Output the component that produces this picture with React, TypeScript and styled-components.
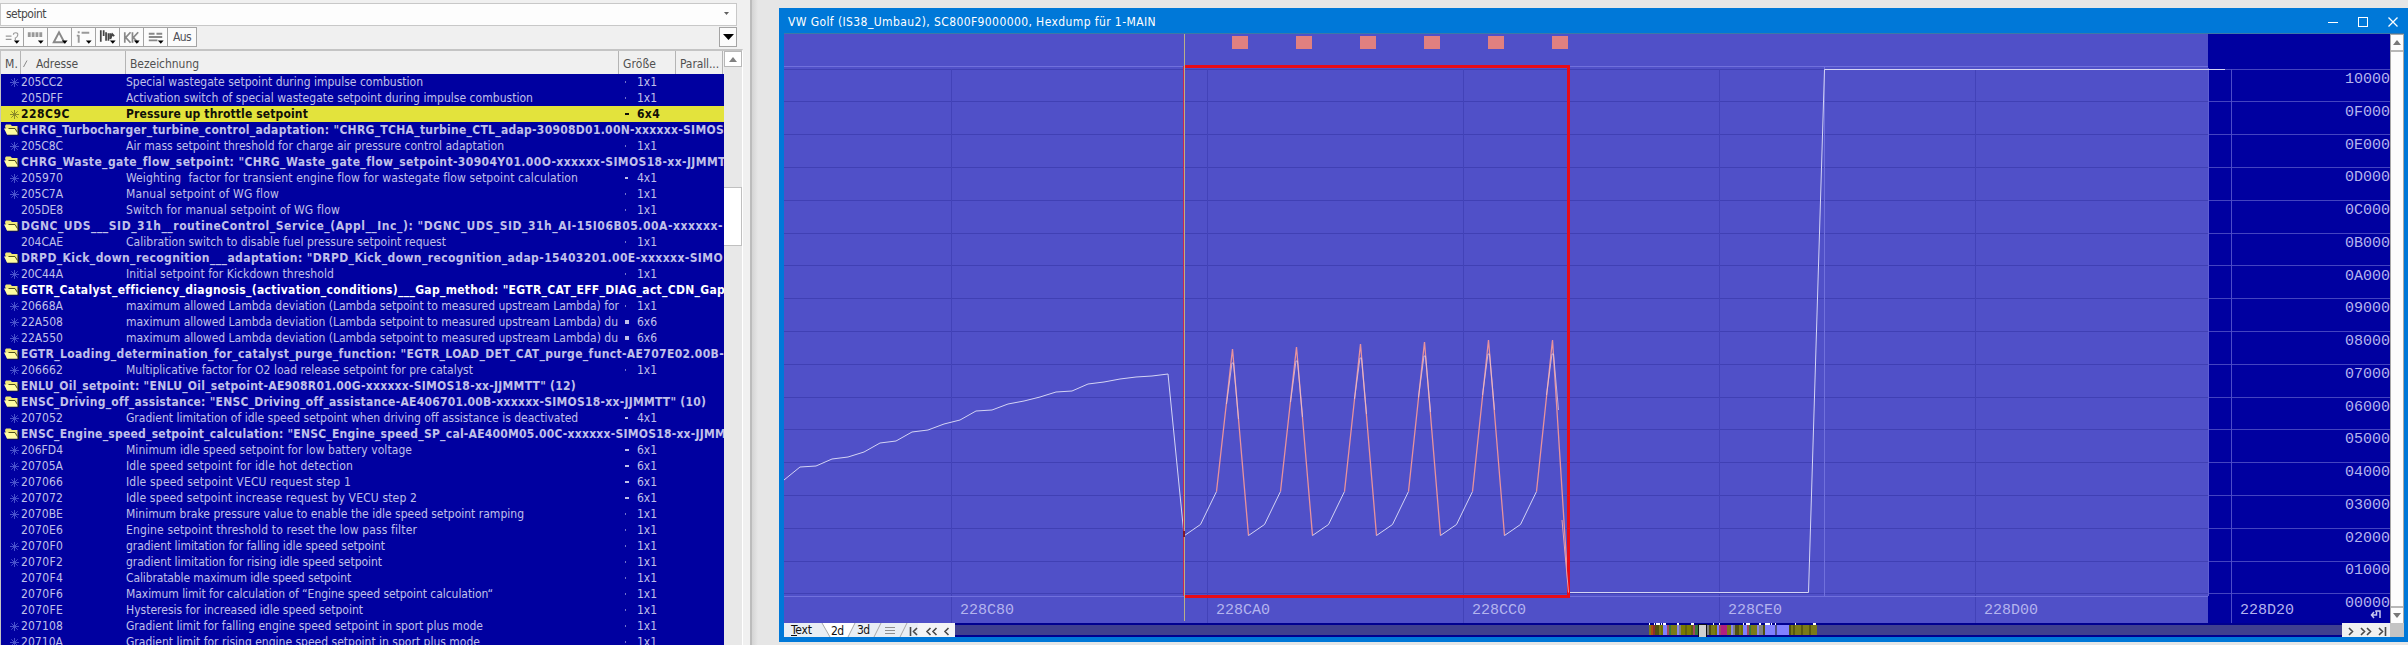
import React, { useLayoutEffect, useRef, useState } from "react";
import styled, { createGlobalStyle } from "styled-components";

const GlobalStyle = createGlobalStyle`
  html, body { margin: 0; height: 645px; overflow: hidden; background: #e6e6e6; }
  * { box-sizing: border-box; }
  #root { height: 645px; font-family: "DejaVu Sans Condensed", "DejaVu Sans", sans-serif; font-stretch: condensed; font-size: 12px; }
`;

const Desktop = styled.div`
  display: flex;
  width: 2408px;
  height: 645px;
  overflow: hidden;
`;

const SidePanel = styled.aside`
  width: 752px;
  flex: none;
  display: flex;
  flex-direction: column;
  background: #f0f0f0;
  border-right: 2px solid #bcbcbc;
  padding-top: 3px;
`;

const SearchBox = styled.div`
  width: 737px;
  height: 23px;
  flex: none;
  display: flex;
  align-items: center;
  justify-content: space-between;
  padding: 0 7px 2px 5px;
  color: #484848;
  background: #fdfdfd;
  border: 1px solid #c8c8c8;
`;

const Toolbar = styled.div`
  display: flex;
  justify-content: space-between;
  width: 737px;
  height: 20px;
  margin-top: 1px;
  flex: none;
`;

const ButtonGroup = styled.div`
  display: flex;
`;

const ToolButton = styled.button<{ $w?: number }>`
  width: ${(p) => p.$w ?? 24}px;
  height: 20px;
  padding: 0;
  display: flex;
  align-items: center;
  justify-content: center;
  border: 1px solid #a4a4a4;
  border-left-width: ${(p) => (p.$w === 18 ? 1 : 0)}px;
  background: #fbfbfb;
  color: #505058;
  font: inherit;
`;

const Table = styled.section`
  display: flex;
  width: 743px;
  flex: 1;
  min-height: 0;
  margin-top: 2px;
  border: 1px solid #c4c4c4;
  border-bottom: 0;
  border-top-width: 2px;
  border-right-color: #fff;
  overflow: hidden;
`;

const TableMain = styled.div`
  width: 723px;
  flex: none;
  overflow: hidden;
`;

const HeaderRow = styled.div`
  display: grid;
  grid-template-columns: 20px 105px 493px 57px 47px 1px;
  height: 23px;
  background: #f0f0f0;
  color: #505050;
`;

const HeaderCell = styled.div<{ $pad?: number }>`
  display: flex;
  align-items: center;
  gap: 8px;
  padding: 2px 0 0 ${(p) => p.$pad ?? 4}px;
  border-right: 1px solid #b4b4b4;
  white-space: nowrap;
`;

type Tone = "normal" | "picked" | "bright";

const Row = styled.div<{ $tone: Tone; $bold: boolean }>`
  display: grid;
  grid-template-columns: 20px 105px 493px 18px 1fr;
  align-items: center;
  height: 16px;
  line-height: 16px;
  white-space: nowrap;
  overflow: hidden;
  background: ${(p) => (p.$tone === "picked" ? "#e3e33c" : "#0000a0")};
  color: ${(p) => (p.$tone === "picked" ? "#101008" : p.$tone === "bright" ? "#ffffff" : "#c0c0ea")};
  font-weight: ${(p) => (p.$bold ? 700 : 400)};
`;

const MarkCell = styled.div`
  display: flex;
  justify-content: flex-end;
  padding-right: 2px;
`;

const Cell = styled.div`
  height: 16px;
`;

const GroupTitle = styled.div`
  grid-column: 2 / -1;
  height: 16px;
`;

const Line = styled.span`
  display: inline-block;
  white-space: pre;
`;

/* One line of text, tracked so that it takes up the given width. */
const Fitted = ({ width, children }: { width: number; children: string }) => {
  const ref = useRef<HTMLSpanElement>(null);
  const [tracking, setTracking] = useState(0);
  useLayoutEffect(() => {
    if (ref.current) {
      const natural = ref.current.getBoundingClientRect().width;
      setTracking((width - natural) / children.length);
    }
  }, [width, children]);
  return <Line ref={ref} style={{ letterSpacing: `${tracking}px` }}>{children}</Line>;
};

const Dot = styled.i<{ $w: number; $h: number }>`
  margin-left: 6px;
  width: ${(p) => p.$w}px;
  height: ${(p) => p.$h}px;
  background: currentColor;
  opacity: ${(p) => (p.$w === 1 ? 0.6 : 1)};
`;

const ListScroll = styled.div`
  flex: 1;
  display: flex;
  flex-direction: column;
  background: #e8e8e8;
`;

const ScrollButton = styled.div<{ $h: number }>`
  height: ${(p) => p.$h}px;
  flex: none;
  display: flex;
  align-items: center;
  justify-content: center;
  border: 1px solid #b8b8b8;
  background: #fff;
`;

const ScrollThumb = styled.div`
  height: 59px;
  margin-top: 120px;
  background: #fff;
  border: 1px solid #c0c0c0;
  border-left: 0;
`;

const Workspace = styled.main`
  flex: 1;
  padding: 8px 0 0 27px;
  background: linear-gradient(90deg, #d4d4d4, #e6e6e6 6px);
`;

const HexWindow = styled.div`
  height: 634px;
  display: flex;
  flex-direction: column;
  background: #0078d8;
  padding: 0 4px 5px 5px;
`;

const TitleBar = styled.header`
  height: 26px;
  flex: none;
  display: flex;
  align-items: center;
  justify-content: space-between;
  padding: 2px 6px 0 4px;
  color: #fff;
  border-bottom: 1px solid #3c78a8;
`;

const WindowButtons = styled.div`
  display: flex;
  align-items: center;
  gap: 20px;
`;

const Content = styled.div`
  display: flex;
  height: 589px;
  flex: none;
`;

const ChartScroll = styled.div`
  width: 14px;
  display: flex;
  flex-direction: column;
  justify-content: space-between;
  background: #fdfdfd;
  border: 1px solid #a8a8a8;
  border-width: 1px 1px 0 1px;
`;

const ChartArrow = styled.div<{ $edge: "top" | "bottom" }>`
  height: 17px;
  display: flex;
  align-items: center;
  justify-content: center;
  border: 0 solid #b8b8b8;
  border-${(p) => (p.$edge === "top" ? "bottom" : "top")}-width: 2px;
`;

const BottomBar = styled.footer`
  display: flex;
  height: 14px;
  flex: none;
`;

const Corner = styled.div`
  width: 14px;
  background: #c4c4c4;
`;

const bullets: Record<string, [number, number]> = { "1x1": [1, 2], "4x1": [3, 2], "6x1": [4, 2], "6x4": [4, 2], "6x6": [4, 4] };

type Item = { a?: string; t: string; w: number; s?: string; star?: boolean; tone?: Tone };

const items: Item[] = [
  { a: "205CC2", t: "Special wastegate setpoint during impulse combustion", w: 297, s: "1x1", star: true },
  { a: "205DFF", t: "Activation switch of special wastegate setpoint during impulse combustion", w: 407, s: "1x1" },
  { a: "228C9C", t: "Pressure up throttle setpoint", w: 182, s: "6x4", star: true, tone: "picked" },
  { t: 'CHRG_Turbocharger_turbine_control_adaptation: "CHRG_TCHA_turbine_CTL_adap-30908D01.00N-xxxxxx-SIMOS', w: 703 },
  { a: "205C8C", t: "Air mass setpoint threshold for charge air pressure control adaptation", w: 378, s: "1x1", star: true },
  { t: 'CHRG_Waste_gate_flow_setpoint: "CHRG_Waste_gate_flow_setpoint-30904Y01.00O-xxxxxx-SIMOS18-xx-JJMMT', w: 704 },
  { a: "205970", t: "Weighting\u00a0 factor for transient engine flow for wastegate flow setpoint calculation", w: 452, s: "4x1", star: true },
  { a: "205C7A", t: "Manual setpoint of WG flow", w: 153, s: "1x1", star: true },
  { a: "205DE8", t: "Switch for manual setpoint of WG flow", w: 214, s: "1x1" },
  { t: 'DGNC_UDS___SID_31h__routineControl_Service_(Appl__Inc_): "DGNC_UDS_SID_31h_AI-15I06B05.00A-xxxxxx-', w: 702 },
  { a: "204CAE", t: "Calibration switch to disable fuel pressure setpoint request", w: 320, s: "1x1" },
  { t: 'DRPD_Kick_down_recognition___adaptation: "DRPD_Kick_down_recognition_adap-15403201.00E-xxxxxx-SIMO', w: 702 },
  { a: "20C44A", t: "Initial setpoint for Kickdown threshold", w: 208, s: "1x1", star: true },
  { t: 'EGTR_Catalyst_efficiency_diagnosis_(activation_conditions)___Gap_method: "EGTR_CAT_EFF_DIAG_act_CDN_Gap', w: 703, tone: "bright" },
  { a: "20668A", t: "maximum allowed Lambda deviation (Lambda setpoint to measured upstream Lambda) for", w: 493, s: "1x1", star: true },
  { a: "22A508", t: "maximum allowed Lambda deviation (Lambda setpoint to measured upstream Lambda) du", w: 492, s: "6x6", star: true },
  { a: "22A550", t: "maximum allowed Lambda deviation (Lambda setpoint to measured upstream Lambda) du", w: 492, s: "6x6", star: true },
  { t: 'EGTR_Loading_determination_for_catalyst_purge_function: "EGTR_LOAD_DET_CAT_purge_funct-AE707E02.00B-', w: 703 },
  { a: "206662", t: "Multiplicative factor for O2 load release setpoint for pre catalyst", w: 347, s: "1x1", star: true },
  { t: 'ENLU_Oil_setpoint: "ENLU_Oil_setpoint-AE908R01.00G-xxxxxx-SIMOS18-xx-JJMMTT" (12)', w: 555 },
  { t: 'ENSC_Driving_off_assistance: "ENSC_Driving_off_assistance-AE406701.00B-xxxxxx-SIMOS18-xx-JJMMTT" (10)', w: 684 },
  { a: "207052", t: "Gradient limitation of idle speed setpoint when driving off assistance is deactivated", w: 452, s: "4x1", star: true },
  { t: 'ENSC_Engine_speed_setpoint_calculation: "ENSC_Engine_speed_SP_cal-AE400M05.00C-xxxxxx-SIMOS18-xx-JJMM', w: 705 },
  { a: "206FD4", t: "Minimum idle speed setpoint for low battery voltage", w: 286, s: "6x1", star: true },
  { a: "20705A", t: "Idle speed setpoint for idle hot detection", w: 227, s: "6x1", star: true },
  { a: "207066", t: "Idle speed setpoint VECU request step 1", w: 225, s: "6x1", star: true },
  { a: "207072", t: "Idle speed setpoint increase request by VECU step 2", w: 291, s: "6x1", star: true },
  { a: "2070BE", t: "Minimum brake pressure value to enable the idle speed setpoint ramping", w: 398, s: "1x1", star: true },
  { a: "2070E6", t: "Engine setpoint threshold to reset the low pass filter", w: 291, s: "1x1" },
  { a: "2070F0", t: "gradient limitation for falling idle speed setpoint", w: 259, s: "1x1", star: true },
  { a: "2070F2", t: "gradient limitation for rising idle speed setpoint", w: 256, s: "1x1", star: true },
  { a: "2070F4", t: "Calibratable maximum idle speed setpoint", w: 225, s: "1x1" },
  { a: "2070F6", t: "Maximum limit for calculation of \u201cEngine speed setpoint calculation\u201c", w: 367, s: "1x1" },
  { a: "2070FE", t: "Hysteresis for increased idle speed setpoint", w: 237, s: "1x1" },
  { a: "207108", t: "Gradient limit for falling engine speed setpoint in sport plus mode", w: 357, s: "1x1", star: true },
  { a: "20710A", t: "Gradient limit for rising engine speed setpoint in sport plus mode", w: 354, s: "1x1", star: true },
];

const Star = ({ dark }: { dark?: boolean }) => (
  <svg width="9" height="9" viewBox="0 0 9 9" stroke={dark ? "#8a8a28" : "#4850cc"} strokeWidth="1">
    <path d="M4.5 0v9M0 4.5h9M1.3 1.3l6.4 6.4M7.7 1.3L1.3 7.7" />
  </svg>
);

const Folder = () => (
  <svg width="15" height="12" viewBox="0 0 15 12">
    <path d="M3 11h11.500V3.500" stroke="#181830" fill="none" />
    <path d="M1 2l1-1.500h4.500L8 2h5.500v8.500H3z" fill="#f0e878" />
    <path d="M0 4.500h10.500l3 6H3z" fill="#fffca0" />
    <path d="M4.500 4.500h6.500l2.500 4" stroke="#50501c" fill="none" />
  </svg>
);

const Triangle = ({ w, h, color, down }: { w: number; h: number; color: string; down?: boolean }) => (
  <svg width={w} height={h} viewBox="0 0 10 10" preserveAspectRatio="none">
    <path d={down ? "M0 0h10L5 10z" : "M0 10h10L5 0z"} fill={color} />
  </svg>
);

const toolIcons: React.ReactNode[] = [
  <g key="a" stroke="#999" fill="none"><path d="M6 8h6M6 11.500h6M14 6.500q0-2 2.500-2t2 2.500-2.500 3v2" strokeWidth="1.2" /></g>,
  <g key="b" fill="#999"><path d="M4 4h3v5H4zM8 4h3v5H8zM12 4h3v5h-3zM16 4h3v5h-3z" /></g>,
  <g key="c" stroke="#888" fill="none"><path d="M6 14.500L11.500 4L17 14.500z" strokeWidth="2" /></g>,
  <g key="d" stroke="#999" fill="none"><path d="M7 3v2M7 7v8M5 7.500h2M10 4.500h8" strokeWidth="2" /></g>,
  <g key="e" stroke="#444" fill="none"><path d="M5 2v12M8 2v6M10.500 4v9M13 5v8M15 5v6l2-5 2 2" strokeWidth="1.800" /></g>,
  <g key="f" stroke="#888" fill="none"><path d="M5 4v11M11 4L6 9.500l5 5.500M13 4v11M19 4l-5 5.500 5 5.500" strokeWidth="1.800" /></g>,
  <g key="g" stroke="#888" fill="none"><path d="M5 5.500h6M13 5.500h6M5 9h14M5 12.500h9" strokeWidth="2" /></g>,
];

/* Chart geometry: the origin is the upper left corner of the plot area. */
const CW = 1606;
const CH = 589;
const OX = 784;
const OY = 34;
const X = (v: number) => v - OX;
const Y = (v: number) => v - OY;
const pts = (list: number[][]) => list.map(([x, y]) => `${X(x)},${Y(y)}`).join(" ");

const rows = Array.from({ length: 17 }, (_, i) => (i === 0 ? 69 : Math.round(68.5 + i * 32.8)));
const rowLabels = ["10000", "0F000", "0E000", "0D000", "0C000", "0B000", "0A000", "09000", "08000", "07000", "06000", "05000", "04000", "03000", "02000", "01000", "00000"];
const columns: [number, string][] = [[951, "228C80"], [1207, "228CA0"], [1463, "228CC0"], [1719, "228CE0"], [1975, "228D00"], [2231, "228D20"]];
const peaks = [349, 347, 344, 342, 340, 340];

const leftCurve = [
  [784, 480], [800, 467], [816, 466], [832, 459], [848, 457], [864, 452], [880, 443], [896, 441], [912, 432], [928, 430], [944, 424], [960, 420],
  [976, 411], [992, 410], [1008, 404], [1024, 401], [1040, 397], [1056, 392], [1072, 391], [1088, 384], [1104, 382], [1120, 379], [1136, 377], [1152, 376], [1168, 374], [1184, 535],
];

const ChartLabel = styled.text`
  font-family: "Liberation Mono", monospace;
  font-size: 15px;
  fill: #b4b4ee;
`;

const Chart = () => (
  <svg width={CW} height={CH} viewBox={`0 0 ${CW} ${CH}`}>
    <rect width={CW} height={CH} fill="#0000a0" />
    <rect width={1424} height={CH} fill="#5050c8" />
    <g shapeRendering="crispEdges">
      {rows.map((y) => (
        <g key={y}>
          <rect x={0} y={Y(y)} width={1424} height={1} fill="#4040b4" />
          <rect x={1424} y={Y(y)} width={182} height={1} fill="#4444c0" />
        </g>
      ))}
      {columns.map(([x]) => (
        <rect key={x} x={X(x)} y={Y(69)} width={1} height={Y(623) - Y(69)} fill={x > 2208 ? "#4c4cc8" : "#4242b8"} />
      ))}
      <rect x={0} y={Y(66)} width={1424} height={1} fill="#7070dc" />
      <rect x={0} y={Y(596)} width={1424} height={1} fill="#7070dc" />
      <rect x={X(1824)} y={Y(66)} width={1} height={530} fill="#7070dc" />
      <rect x={X(2208)} y={Y(68)} width={1} height={528} fill="#6060d0" />
      {peaks.map((_, i) => (
        <rect key={i} x={X(1232 + 64 * i)} y={2} width={16} height={13} fill="#e08080" />
      ))}
    </g>
    {rowLabels.map((l, i) => (
      <ChartLabel key={l} x={X(2345)} y={Y(83 + i * 32.75)} textLength={45}>{l}</ChartLabel>
    ))}
    {columns.map(([x, l]) => (
      <ChartLabel key={l} x={X(x + 9)} y={Y(614)} textLength={54}>{l}</ChartLabel>
    ))}
    <g fill="none" strokeWidth="1" stroke="#d4d4f4">
      <polyline points={pts(leftCurve)} />
      {peaks.map((p, i) => {
        const x = 1184.5 + 64 * i;
        const last = i === 5;
        return (
          <g key={i}>
            <polyline points={pts([[x, 535.5], [x + 16, 524.5], [x + 32, 491.5]])} />
            <polyline points={pts([[x + 32, 491.5], [x + 48, p], last ? [x + 64, 592.5] : [x + 64, 535.5]])} stroke="#e8929c" strokeWidth="1.3" />
            <polyline points={pts([[x + 42, p + 55], [x + 47.5, p + 14], [x + 49, p + 14], [x + 54, p + 70]])} stroke="#e4c4d8" strokeWidth="0.8" />
          </g>
        );
      })}
      <polyline points={pts([[1568.5, 592.5], [1808.5, 592.5], [1824.5, 69.5], [2225, 69.5]])} />
    </g>
    <g shapeRendering="crispEdges">
      <rect x={X(1183)} y={Y(66)} width={2} height={530} fill="#c02858" />
      <rect x={X(1185)} y={Y(65)} width={385} height={3} fill="#e80c18" />
      <rect x={X(1185)} y={Y(595)} width={385} height={3} fill="#e80c18" />
      <rect x={X(1567)} y={Y(65)} width={3} height={531} fill="#e80c18" />
      <rect x={X(1184)} y={0} width={1} height={587} fill="#b8b088" />
      <rect x={X(1183)} y={Y(531)} width={2} height={6} fill="#801828" />
    </g>
    <polyline points={pts([[1562, 520], [1568.5, 592.5]])} stroke="#e8a0ac" fill="none" />
    <path d={`M${X(2372)} ${Y(615)}h4.500v-3M${X(2376)} ${Y(612)}v-1h4v7M${X(2374)} ${Y(612)}l-2.500 3 2.500 3`} stroke="#c8c8f0" strokeWidth="1.500" fill="none" />
  </svg>
);

const Tabs = () => (
  <svg width="171" height="14" viewBox="0 0 171 14" fontFamily="DejaVu Sans Condensed, DejaVu Sans, sans-serif" fontStretch="condensed" fontSize="12">
    <rect width="171" height="14" fill="#e9eef4" />
    <rect x="134" width="37" height="14" fill="#f4f4f6" />
    <path d="M38 0L46 14H64L71 0z" fill="#fff" />
    <path d="M38 0L46 14M64 14L71 0M90 14L97 0M116 14L123 0" stroke="#a8a8a8" fill="none" />
    <g fill="#101010">
      <text x="7" y="11" textLength="21">Text</text>
      <text x="47" y="12" textLength="13">2d</text>
      <text x="73" y="11" textLength="13">3d</text>
    </g>
    <path d="M7 12.500h6" stroke="#101010" />
    <path d="M101 4.500h10M101 7.500h10M101 10.500h10" stroke="#909090" />
    <path d="M126.500 4v9M133 5l-3.500 3.500 3.500 3.500M146.500 5l-3.500 3.500 3.500 3.500M152.500 5l-3.500 3.500 3.500 3.500M164.500 5l-3.500 3.500 3.500 3.500" stroke="#484848" fill="none" strokeWidth="1.600" />
  </svg>
);

const palette = ["#7a7a18", "#505010", "#8080ff", "#7a7a18", "#808080", "#707000", "#38783c", "#8888e8", "#7a7a18", "#a04860"];
const stripes = Array.from({ length: 84 }, (_, i) => {
  const x = 694 + i * 2;
  if (i < 3) return { x, c: ["#7a7a18", "#b04810", "#883030"][i] };
  if (i >= 58 && i < 63) return { x, c: "#8080ff" };
  if (i >= 63 && i < 70) return { x, c: i === 63 ? "#505080" : "#8080ff" };
  if (i >= 36 && i < 39) return { x, c: "#b02080" };
  if (i >= 16 && i < 22) return { x, c: i % 3 ? "#7a7a00" : "#606010" };
  if (i >= 72) return { x, c: i % 4 ? "#7a7a18" : "#585810" };
  return { x, c: palette[(i * 7 + (i >> 2) * 3) % palette.length] };
});
const ticks = [[694, 1], [699, 1], [701, 4], [706, 1], [708, 3], [722, 2], [736, 3], [758, 1], [764, 1], [788, 1], [791, 4], [804, 2], [810, 5], [816, 1], [820, 1], [840, 1], [858, 3]];

const Overview = () => (
  <svg width="1387" height="14" viewBox="0 0 1387 14" shapeRendering="crispEdges">
    <rect width="1387" height="14" fill="#000090" />
    <rect y="2" width="1387" height="10" fill="#404090" />
    {stripes.map((s) => <rect key={s.x} x={s.x} y="2" width="2" height="10" fill={s.c} />)}
    {ticks.map(([x, w]) => <rect key={x} x={x} y="0" width={w} height="2" fill="#fff" />)}
    <rect x="743" y="1" width="9" height="13" fill="#101018" />
    <rect x="744" y="2" width="7" height="12" fill="#d0d0d0" />
  </svg>
);

const Pager = () => (
  <svg width="48" height="14" viewBox="0 0 48 14">
    <rect width="48" height="14" fill="#f0f0f0" />
    <path d="M7 5l3.500 3.500L7 12M19 5l3.500 3.500L19 12M25 5l3.500 3.500L25 12M37 5l3.500 3.500L37 12M43.500 4v9" stroke="#484848" fill="none" strokeWidth="1.600" />
  </svg>
);

export default function App() {
  return (
    <Desktop>
      <GlobalStyle />
      <SidePanel>
        <SearchBox>
          <Fitted width={40}>setpoint</Fitted>
          <Triangle w={5} h={3} color="#606060" down />
        </SearchBox>
        <Toolbar>
          <ButtonGroup>
            {toolIcons.map((icon, i) => (
              <ToolButton key={i}>
                <svg width="24" height="19" viewBox="0 0 24 19">
                  {icon}
                  <path d="M14.500 12.500h6l-3 3.500z" fill="#000" />
                </svg>
              </ToolButton>
            ))}
            <ToolButton $w={29}><Fitted width={18}>Aus</Fitted></ToolButton>
          </ButtonGroup>
          <ToolButton $w={18}><Triangle w={11} h={6} color="#000" down /></ToolButton>
        </Toolbar>
        <Table>
          <TableMain>
            <HeaderRow>
              <HeaderCell><Fitted width={13}>M.</Fitted></HeaderCell>
              <HeaderCell $pad={2}>
                <svg width="5" height="7" viewBox="0 0 5 7"><path d="M0.500 7L4 0.500" stroke="#888" /></svg>
                <Fitted width={42}>Adresse</Fitted>
              </HeaderCell>
              <HeaderCell><Fitted width={69}>Bezeichnung</Fitted></HeaderCell>
              <HeaderCell><Fitted width={33}>Größe</Fitted></HeaderCell>
              <HeaderCell><Fitted width={39}>Parall...</Fitted></HeaderCell>
            </HeaderRow>
            {items.map((it) =>
              it.a ? (
                <Row key={it.a} $tone={it.tone ?? "normal"} $bold={it.tone === "picked"}>
                  <MarkCell>{it.star && <Star dark={it.tone === "picked"} />}</MarkCell>
                  <Cell><Fitted width={it.tone === "picked" ? 49 : 42}>{it.a}</Fitted></Cell>
                  <Cell><Fitted width={it.w}>{it.t}</Fitted></Cell>
                  <Dot $w={bullets[it.s!][0]} $h={bullets[it.s!][1]} />
                  <Cell><Fitted width={it.tone === "picked" ? 23 : 20}>{it.s!}</Fitted></Cell>
                </Row>
              ) : (
                <Row key={it.t} $tone={it.tone ?? "normal"} $bold>
                  <MarkCell><Folder /></MarkCell>
                  <GroupTitle><Fitted width={it.w}>{it.t}</Fitted></GroupTitle>
                </Row>
              )
            )}
          </TableMain>
          <ListScroll>
            <ScrollButton $h={16}><Triangle w={8} h={5} color="#808080" /></ScrollButton>
            <ScrollThumb />
          </ListScroll>
        </Table>
      </SidePanel>
      <Workspace>
        <HexWindow>
          <TitleBar>
            <Fitted width={368}>VW Golf (IS38_Umbau2), SC800F9000000, Hexdump für 1-MAIN</Fitted>
            <WindowButtons>
              <svg width="10" height="10" viewBox="0 0 10 10"><path d="M0 5.500h10" stroke="#fff" /></svg>
              <svg width="10" height="10" viewBox="0 0 10 10"><rect x="0.500" y="0.500" width="9" height="9" stroke="#fff" fill="none" /></svg>
              <svg width="10" height="10" viewBox="0 0 10 10"><path d="M0.500 0.500l9 9M9.500 0.500l-9 9" stroke="#fff" strokeWidth="1.300" /></svg>
            </WindowButtons>
          </TitleBar>
          <Content>
            <Chart />
            <ChartScroll>
              <ChartArrow $edge="top"><Triangle w={8} h={5} color="#787878" /></ChartArrow>
              <ChartArrow $edge="bottom"><Triangle w={8} h={5} color="#787878" down /></ChartArrow>
            </ChartScroll>
          </Content>
          <BottomBar>
            <Tabs />
            <Overview />
            <Pager />
            <Corner />
          </BottomBar>
        </HexWindow>
      </Workspace>
    </Desktop>
  );
}
